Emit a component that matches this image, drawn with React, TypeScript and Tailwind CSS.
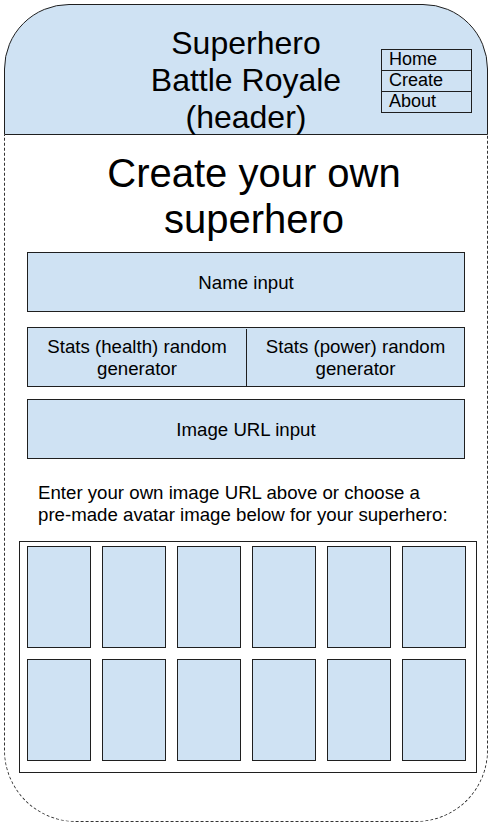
export default function App() {
  const cells = [0, 1, 2, 3, 4, 5];
  return (
    <div className="w-[497px] h-[826px] bg-white pt-[4px] pl-[4px] text-black font-['Liberation_Sans',Arial,sans-serif]">
      <div className="w-[484px]">
        <header className="grid grid-cols-[1fr_auto_1fr] h-[131px] border border-[#1f1f1f] rounded-t-[65px] bg-[#cfe2f3]">
          <div />
          <div className="pt-[20px] text-center text-[32px] leading-[37px] whitespace-nowrap">
            Superhero
            <br />
            Battle Royale
            <br />
            (header)
          </div>
          <div className="flex justify-end items-start pt-[44px] pr-[15px]">
            <nav className="w-[91px] border border-[#1f1f1f] text-[18px]">
              <div className="h-[20px] leading-[19px] pl-[7px]">Home</div>
              <div className="h-[21px] leading-[19px] pl-[7px] border-t border-[#1f1f1f]">Create</div>
              <div className="h-[21px] leading-[19px] pl-[7px] border-t border-[#1f1f1f]">About</div>
            </nav>
          </div>
        </header>
        <main className="h-[687px] border-x border-b border-dashed border-[#333] rounded-b-[72px]">
          <h1 className="pt-[15px] pl-[16px] text-center text-[40px] leading-[46px]">
            Create your own
            <br />
            superhero
          </h1>
          <div className="mx-[22px] mt-[10px] h-[60px] border border-[#1f1f1f] bg-[#cfe2f3] flex items-center justify-center text-[18.67px] leading-[22px] pt-[2px]">
            Name input
          </div>
          <div className="mx-[22px] mt-[15px] h-[60px] border border-[#1f1f1f] bg-[#cfe2f3] grid grid-cols-2 text-[18.67px] leading-[22px] pt-[1px]">
            <div className="flex items-center justify-center text-center">
              Stats (health) random
              <br />
              generator
            </div>
            <div className="flex items-center justify-center text-center border-l border-[#1f1f1f]">
              Stats (power) random
              <br />
              generator
            </div>
          </div>
          <div className="mx-[22px] mt-[12px] h-[60px] border border-[#1f1f1f] bg-[#cfe2f3] flex items-center justify-center text-[18.67px] leading-[22px] pt-[2px]">
            Image URL input
          </div>
          <p className="ml-[33px] mt-[23px] text-[18.67px] leading-[22px] whitespace-nowrap">
            Enter your own image URL above or choose a
            <br />
            pre-made avatar image below for your superhero:
          </p>
          <div className="ml-[14px] mt-[15px] w-[458px] h-[232px] border border-[#1f1f1f] pt-[4px] pb-[11px] pl-[7px] pr-[10px] flex flex-col gap-[11px]">
            {[0, 1].map((r) => (
              <div key={r} className="flex justify-between">
                {cells.map((c) => (
                  <div key={c} className="w-[64px] h-[102px] border border-[#1f1f1f] bg-[#cfe2f3]" />
                ))}
              </div>
            ))}
          </div>
        </main>
      </div>
    </div>
  );
}
